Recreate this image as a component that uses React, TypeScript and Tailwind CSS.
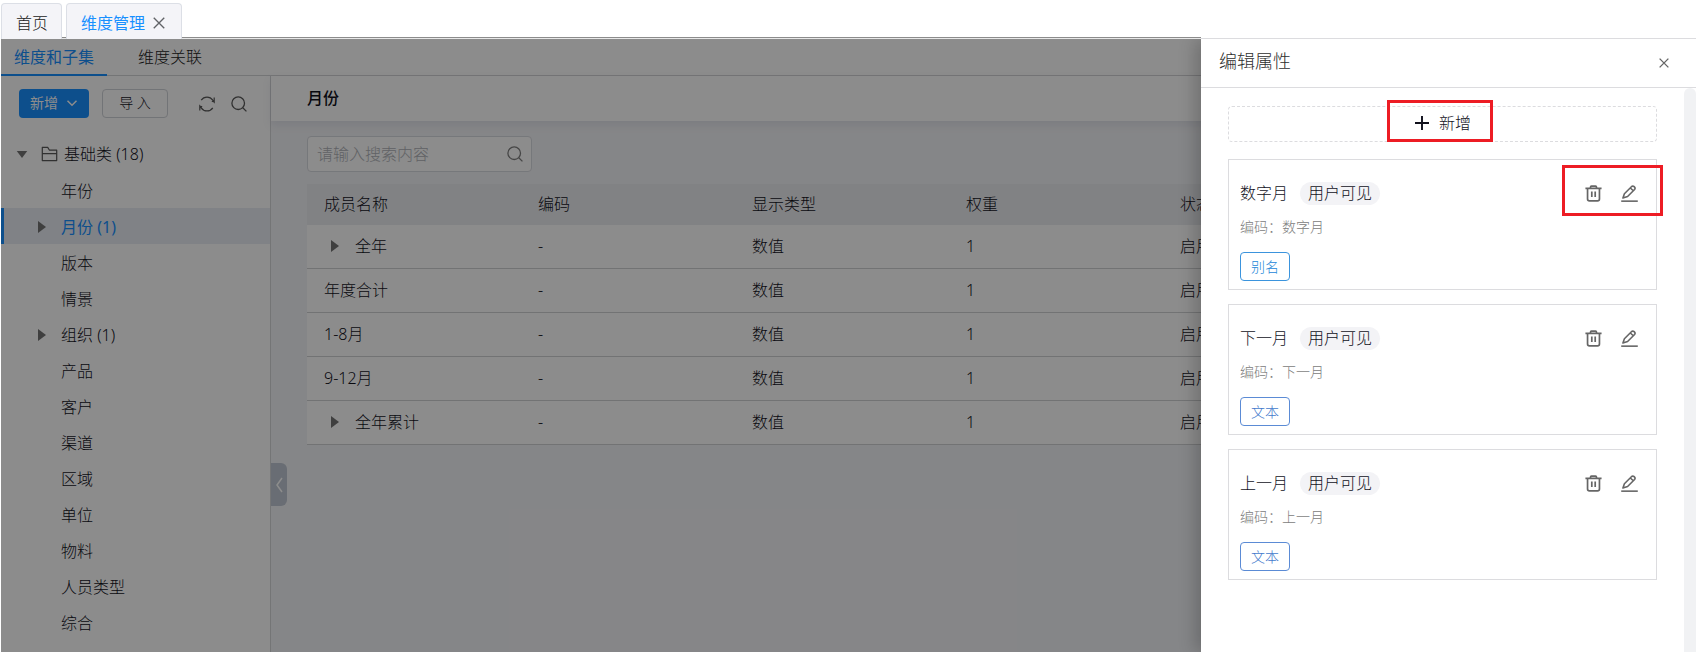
import type { ReactNode } from 'react'

interface TreeItem {
  name: string
  count?: number
  active?: boolean
}

interface Member {
  name: string
  expandable?: boolean
}

interface Attribute {
  name: string
  tag: string
  tagClass: string
}

const treeItems: TreeItem[] = [
  { name: '年份' },
  { name: '月份', count: 1, active: true },
  { name: '版本' },
  { name: '情景' },
  { name: '组织', count: 1 },
  { name: '产品' },
  { name: '客户' },
  { name: '渠道' },
  { name: '区域' },
  { name: '单位' },
  { name: '物料' },
  { name: '人员类型' },
  { name: '综合' },
]

const members: Member[] = [
  { name: '全年', expandable: true },
  { name: '年度合计' },
  { name: '1-8月' },
  { name: '9-12月' },
  { name: '全年累计', expandable: true },
]

const attributes: Attribute[] = [
  { name: '数字月', tag: '别名', tagClass: 'border-[#3b94dd] text-[#2387d8]' },
  { name: '下一月', tag: '文本', tagClass: 'border-[#5b8bd5] text-[#4379cc]' },
  { name: '上一月', tag: '文本', tagClass: 'border-[#5b8bd5] text-[#4379cc]' },
]

function Icon({ children, className }: { children: ReactNode; className?: string }) {
  return (
    <svg viewBox="0 0 16 16" fill="none" stroke="currentColor" className={className} aria-hidden="true">
      {children}
    </svg>
  )
}

function SearchIcon() {
  return (
    <Icon className="h-4 w-4">
      <circle cx="7.2" cy="7.2" r="6.3" strokeWidth="1.3" />
      <path d="M11.8 11.8 15.4 15.4" strokeWidth="1.3" />
    </Icon>
  )
}

function RefreshIcon() {
  return (
    <Icon className="h-4 w-4">
      <path d="M2.2 4.2A7 7 0 0 1 13.8 4.2L15.2 6V1.6M15.2 6 12.8 5.2" strokeWidth="1.2" />
      <path d="M13.8 11.8A7 7 0 0 1 2.2 11.8L.8 10V14.4M.8 10 3.2 10.8" strokeWidth="1.2" />
    </Icon>
  )
}

function TrashIcon() {
  return (
    <Icon className="h-[17px] w-[17px]">
      <path d="M.4 3.1H15.6M5.2 3V1.8Q5.2 1 6 1H10Q10.8 1 10.8 1.8V3" strokeWidth="1.6" />
      <path d="M2.4 3.2V13.2Q2.4 15 4.2 15H11.8Q13.6 15 13.6 13.2V3.2M6.4 6.2V11.4M9.6 6.2V11.4" strokeWidth="1.6" />
    </Icon>
  )
}

function EditIcon() {
  return (
    <Icon className="h-[17px] w-[17px]">
      <path d="M.2 15.2H15.8" strokeWidth="1.5" />
      <path d="M1.8 12.2 3.2 8.2 9.8 1.6Q11 .6 12.2 1.4L12.6 1.8Q13.8 3 12.8 4.2L6.2 10.8ZM8.8 2.8 11.6 5.4" strokeWidth="1.5" strokeLinejoin="round" />
    </Icon>
  )
}

function CaretRight({ className }: { className?: string }) {
  return (
    <svg viewBox="0 0 8 12" className={`h-3 w-2 fill-[#737373] ${className ?? ''}`} aria-hidden="true">
      <path d="M0 0 8 6 0 12Z" />
    </svg>
  )
}

function TabBar() {
  return (
    <header className="flex h-[39px] shrink-0 items-end bg-white pl-px">
      <a
        href="#home"
        className="flex h-9 items-center rounded-t border border-b-0 border-[#dcdfe6] bg-[#f4f4f8] pt-0.5 pr-[13px] pl-[14px] text-[#222]"
      >
        首页
      </a>
      <span className="h-0.5 w-1 border-t border-[#8c8c8c] bg-[#e8e8e8]" />
      <div className="flex h-9 items-center gap-2 rounded-t border border-b-0 border-[#dcdfe6] bg-[#f4f4f8] pt-0.5 pr-4 pl-[14px]">
        <a href="#dimension" className="font-normal text-[#1890ff]">维度管理</a>
        <button type="button" aria-label="关闭标签" className="text-[#606266]">
          <Icon className="h-3 w-3">
            <path d="M1 1 15 15M15 1 1 15" strokeWidth="1.8" />
          </Icon>
        </button>
      </div>
      <span className="h-0.5 flex-1 border-t border-[#8c8c8c] bg-[#e8e8e8]" />
    </header>
  )
}

function Sidebar() {
  return (
    <aside className="w-[270px] shrink-0 border-r border-[#d4d5d8] bg-white">
      <div className="flex items-center px-[18px] pt-[13px]">
        <button
          type="button"
          className="flex h-[29px] items-center gap-2 rounded bg-[#1890ff] px-[11px] pb-0.5 text-[14px] font-normal text-white"
        >
          新增
          <Icon className="h-3 w-3">
            <path d="M2 5 8 11 14 5" strokeWidth="2" />
          </Icon>
        </button>
        <button
          type="button"
          className="ml-[13px] h-[29px] w-[66px] rounded border border-[#d0d3d9] pb-0.5 text-[14px] text-[#11111c]"
        >
          导 入
        </button>
        <button type="button" aria-label="刷新" className="ml-[31px] text-[#595959]">
          <RefreshIcon />
        </button>
        <button type="button" aria-label="搜索" className="ml-4 text-[#595959]">
          <SearchIcon />
        </button>
      </div>

      <div className="mt-[18px] flex h-9 items-center pl-[15px] text-[#11111c]">
        <svg viewBox="0 0 12 8" className="h-[7px] w-3 fill-[#737373]" aria-hidden="true">
          <path d="M0 0H12L6 8Z" />
        </svg>
        <Icon className="mr-[6px] ml-[13px] h-4 w-[17px] text-[#595959]">
          <path d="M.8 14.6V1.4H6.2L8 4.2H15.2V14.6ZM.8 7.6H15.2" strokeWidth="1.2" strokeLinejoin="round" />
        </Icon>
        <span>基础类 (18)</span>
      </div>
      <ul>
        {treeItems.map(item => (
          <li
            key={item.name}
            className={`flex h-9 items-center border-l-3 pt-0.5 pl-[34px] ${
              item.active
                ? 'border-[#1890ff] bg-[#e9edf5] font-normal text-[#1890ff]'
                : 'border-transparent text-[#11111c]'
            }`}
          >
            <span className="w-[23px]">{item.count && <CaretRight />}</span>
            {item.name}
            {item.count && ` (${item.count})`}
          </li>
        ))}
      </ul>
    </aside>
  )
}

function MemberTable() {
  const cell = 'border-b border-[#d0d1d4] px-[17px] pb-0.5'

  return (
    <table className="mt-3 w-full table-fixed border-separate border-spacing-0 text-left text-[#11111c]">
      <colgroup>
        <col className="w-[214px]" />
        <col className="w-[214px]" />
        <col className="w-[214px]" />
        <col className="w-[214px]" />
        <col />
      </colgroup>
      <thead>
        <tr className="h-[41px] bg-[#ecedf0]">
          {['成员名称', '编码', '显示类型', '权重', '状态'].map(title => (
            <th key={title} className="px-[17px] pb-0.5 font-light">{title}</th>
          ))}
        </tr>
      </thead>
      <tbody>
        {members.map(member => (
          <tr key={member.name} className="h-11 bg-white">
            <td className={cell}>
              <div className="flex items-center">
                {member.expandable && <CaretRight className="mr-4 ml-[7px]" />}
                {member.name}
              </div>
            </td>
            <td className={cell}>-</td>
            <td className={cell}>数值</td>
            <td className={cell}>1</td>
            <td className={cell}>启用</td>
          </tr>
        ))}
      </tbody>
    </table>
  )
}

function AttributeCard({ attribute }: { attribute: Attribute }) {
  return (
    <article className="border border-[#dcdcdf] px-[11px] pt-[21px] pb-2">
      <div className="flex items-center">
        <h3 className="text-[#11111c]">{attribute.name}</h3>
        <span className="ml-3 h-[23px] rounded-full bg-[#f3f3f6] px-2 leading-[22px] text-[#11111c]">用户可见</span>
        <div className="ml-auto flex gap-[19px] pr-[7px] text-[#666]">
          <button type="button" aria-label={`删除${attribute.name}`}>
            <TrashIcon />
          </button>
          <button type="button" aria-label={`编辑${attribute.name}`}>
            <EditIcon />
          </button>
        </div>
      </div>
      <p className="mt-3 text-[14px] leading-5 text-[#808080]">编码：{attribute.name}</p>
      <span className={`mt-[15px] inline-block h-[29px] rounded border px-[10px] align-top text-[14px] leading-[27px] ${attribute.tagClass}`}>
        {attribute.tag}
      </span>
    </article>
  )
}

function Drawer() {
  return (
    <section
      role="dialog"
      aria-label="编辑属性"
      className="absolute -top-0.5 right-0 bottom-0 flex w-[495px] flex-col bg-white pt-px"
    >
      <header className="flex h-[50px] shrink-0 items-center justify-between border-y border-[#dcdcdf] pr-[27px] pl-[18px]">
        <h2 className="pb-1 text-[18px] text-[#2e2e2e]">编辑属性</h2>
        <button type="button" aria-label="关闭" className="text-[#666]">
          <Icon className="h-[10px] w-[10px]">
            <path d="M1 1 15 15M15 1 1 15" strokeWidth="2.2" />
          </Icon>
        </button>
      </header>
      <div className="flex min-h-0 flex-1">
        <div className="relative flex-1 overflow-hidden pt-[18px] pr-[27px] pl-[27px]">
          <button
            type="button"
            className="flex h-9 w-full items-center justify-center gap-[10px] rounded border border-dashed border-[#dcdcdf] pb-0.5 pl-px text-[#11111c]"
          >
            <Icon className="h-[14px] w-[14px]">
              <path d="M8 0V16M0 8H16" strokeWidth="2.2" />
            </Icon>
            新增
          </button>
          <div className="mt-[17px] space-y-[14px]">
            {attributes.map(attribute => (
              <AttributeCard key={attribute.name} attribute={attribute} />
            ))}
          </div>
          {/* highlight frames */}
          <div className="pointer-events-none absolute top-3 left-[186px] h-[42px] w-[106px] border-3 border-[#ed1c24]" />
          <div className="pointer-events-none absolute top-[77px] right-[21px] h-[51px] w-[101px] border-3 border-[#ed1c24]" />
        </div>
        <div className="w-3 rounded-t-full bg-[#f1f2f4]" />
      </div>
    </section>
  )
}

export default function App() {
  return (
    <div className="flex h-screen flex-col overflow-hidden bg-white font-['Noto_Sans','Noto_Sans_CJK_SC',sans-serif] text-[16px] leading-6 font-light">
      <TabBar />
      <div className="relative ml-px flex min-h-0 flex-1 flex-col">
        <nav className="flex h-[37px] shrink-0 border-b border-[#d4d5d8] bg-white">
          <a href="#subsets" className="relative h-[37px] px-[13px] leading-9 font-normal text-[#1890ff]">
            维度和子集
            <span className="absolute inset-x-0 bottom-0 h-0.5 bg-[#1890ff]" />
          </a>
          <a href="#relations" className="ml-[18px] px-[13px] leading-9 text-[#222]">维度关联</a>
        </nav>
        <div className="flex min-h-0 flex-1">
          <Sidebar />
          <main className="relative min-w-0 flex-1 bg-[#f3f4f7]">
            <h1 className="h-[45px] bg-white pl-9 leading-[45px] font-medium text-[#11111c] shadow-[0_4px_8px_rgba(120,130,160,0.15)]">
              月份
            </h1>
            <div className="px-9 pt-[15px]">
              <label className="flex h-9 w-[225px] items-center rounded border border-[#d8dae0] bg-white pr-2 pl-[9px] text-[#808080]">
                <input
                  type="text"
                  aria-label="搜索成员"
                  placeholder="请输入搜索内容"
                  className="min-w-0 flex-1 bg-transparent outline-none placeholder:text-[#b0b2b8]"
                />
                <SearchIcon />
              </label>
              <MemberTable />
            </div>
            <button
              type="button"
              aria-label="收起侧栏"
              className="absolute top-[387px] left-0 flex h-[43px] w-4 items-center justify-center rounded-r-md bg-[#bfc7d3] text-white"
            >
              <svg viewBox="0 0 8 16" fill="none" stroke="currentColor" strokeWidth="1.5" className="h-4 w-2" aria-hidden="true">
                <path d="M7 1 2 8 7 15" />
              </svg>
            </button>
          </main>
        </div>
        <div className="absolute inset-0 overflow-hidden bg-black/45">
          <div className="ml-auto h-full w-[495px] shadow-[-6px_0_16px_rgba(0,0,0,0.2)]" />
        </div>
        <Drawer />
      </div>
    </div>
  )
}
